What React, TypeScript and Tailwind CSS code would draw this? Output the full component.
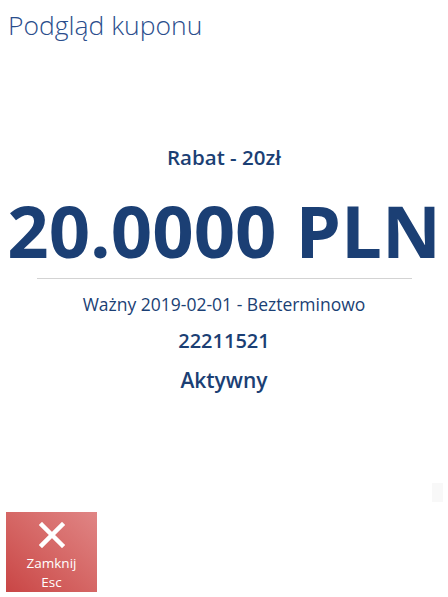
import React from "react";

export default function App() {
  return (
    <div className="relative w-[448px] h-[597px] bg-white overflow-hidden" style={{ fontFamily: '"Open Sans", "Noto Sans", sans-serif' }}>
      <div className="flex flex-col h-full">
        <h1 className="pl-[8px] pt-[7px] text-[26.5px] leading-[36px] font-light text-[#2a4d8c]">Podgląd kuponu</h1>
        <div className="flex flex-col items-center text-[#1b3f74] mt-[100px]">
          <div className="text-[20.5px] leading-[28px] font-semibold">Rabat - 20zł</div>
          <div className="mt-[16px] text-[72.5px] leading-[86px] font-bold">20.0000 PLN</div>
          <div className="w-[375px] h-px bg-[#d3d3d3] mt-[5px]" />
          <div className="mt-[13px] text-[17.5px] leading-[24px] font-normal">Ważny 2019-02-01 - Bezterminowo</div>
          <div className="mt-[11px] text-[20px] leading-[28px] font-semibold">22211521</div>
          <div className="mt-[11px] text-[21px] leading-[28px] font-semibold">Aktywny</div>
        </div>
        <div className="flex-1" />
        <div className="pl-[6px] pb-[5px]">
          <button className="w-[91px] h-[80px] flex flex-col items-center justify-start pt-[10px] bg-gradient-to-tr from-[#c94545] to-[#e08585] text-white">
            <svg width="26" height="26" viewBox="0 0 26 26">
              <path d="M3 3 L23 23 M23 3 L3 23" stroke="white" strokeWidth="4.5" strokeLinecap="square" />
            </svg>
            <span className="mt-[5px] text-[13.5px] leading-[20px]">Zamknij</span>
            <span className="text-[13.5px] leading-[19px]">Esc</span>
          </button>
        </div>
      </div>
      <div className="absolute left-[432px] top-[483px] w-[11px] h-[19px] bg-[#f8f8f8]" />
    </div>
  );
}
